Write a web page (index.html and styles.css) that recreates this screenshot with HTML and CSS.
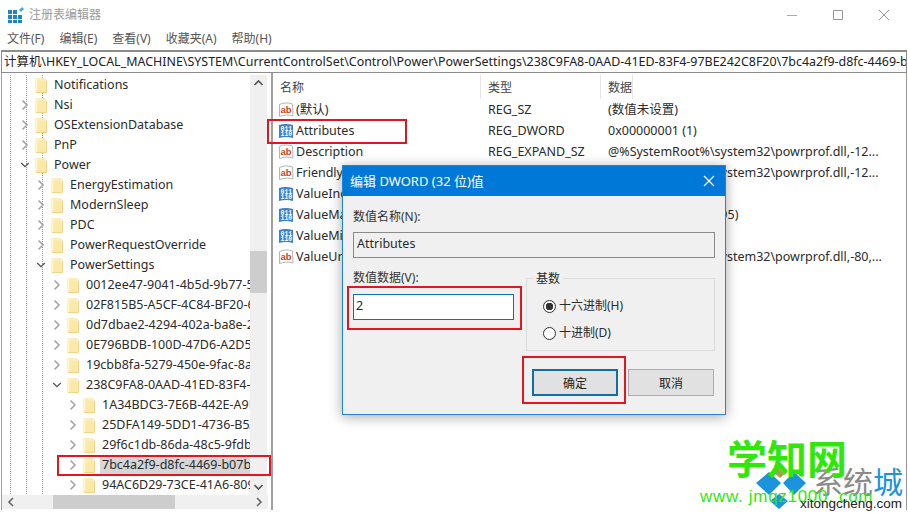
FILE: index.html
```html
<!DOCTYPE html>
<html lang="zh">
<head>
<meta charset="utf-8">
<title>注册表编辑器</title>
<link rel="stylesheet" href="styles.css">
</head>
<body>
<svg class="defs" width="0" height="0" aria-hidden="true">
  <symbol id="folder" viewBox="0 0 14 16">
    <path d="M1 1h10l2 3v11.500H1z" fill="#fcecb6"/>
    <path d="M1 1h2.500v14.500H1z" fill="#fdf3cf"/>
    <path d="M3.500 4h9v11.500h-9z" fill="#fce8a8"/>
    <path d="M12.500 4.500v11H2" fill="none" stroke="#f0d488"/>
  </symbol>
  <symbol id="chev-r" viewBox="0 0 10 12"><path d="M2.500 1.500 7 6l-4.500 4.500" fill="none" stroke="#a6a6a6" stroke-width="1.600"/></symbol>
  <symbol id="chev-d" viewBox="0 0 12 10"><path d="M1.500 2.500 6 7l4.500-4.500" fill="none" stroke="#555" stroke-width="1.600"/></symbol>
  <symbol id="page-sz" viewBox="0 0 16 16">
    <path d="M1.500 2.500c4-2 9-2 13-.5l.5 12c-4-1.500-9-1-13.500.5z" fill="#fff" stroke="#b4b4b4"/>
  </symbol>
  <symbol id="page-dw" viewBox="0 0 16 16">
    <path d="M1 2c4-1.500 9-1.500 14 0v13c-5-1.500-10-1-14 0z" fill="#3a80cf"/>
  </symbol>
</svg>

<div class="window">
  <header class="titlebar">
    <svg class="app-icon" width="16" height="16" viewBox="0 0 16 16">
      <path d="M0 3h4v4H0zM5 3h4v4H5zM0 8h4v4H0zM5 8h4v4H5zM10 8h4v4h-4zM0 13h4v3H0zM5 13h4v3H5zM10 13h4v3h-4z" fill="#1c86c8"/>
      <path d="M11 3l3-3 2 2-3 3z" fill="#4aa7dc"/>
    </svg>
    <span class="app-name">注册表编辑器</span>
    <div class="winbtns">
      <svg width="12" height="12" viewBox="0 0 12 12"><path d="M1 6.500h10" stroke="#aaa"/></svg>
      <svg width="12" height="12" viewBox="0 0 12 12"><path d="M1.500 1.500h9v9h-9z" fill="none" stroke="#999"/></svg>
      <svg width="12" height="12" viewBox="0 0 12 12"><path d="M1 1l10 10M11 1 1 11" stroke="#999"/></svg>
    </div>
  </header>
  <nav class="menubar">
    <span>文件(F)</span><span>编辑(E)</span><span>查看(V)</span><span>收藏夹(A)</span><span>帮助(H)</span>
  </nav>
  <div class="address">计算机\HKEY_LOCAL_MACHINE\SYSTEM\CurrentControlSet\Control\Power\PowerSettings\238C9FA8-0AAD-41ED-83F4-97BE242C8F20\7bc4a2f9-d8fc-4469-b07b-33eb785aaca0</div>
  <main class="panes">
    <section class="tree-pane">
      <div class="tree-view">
        <ul class="tree">
          <li class="node l1 none"><svg class="tw"></svg><svg class="fd"><use href="#folder"/></svg><span>Notifications</span></li>
          <li class="node l1"><svg class="tw"><use href="#chev-r"/></svg><svg class="fd"><use href="#folder"/></svg><span>Nsi</span></li>
          <li class="node l1"><svg class="tw"><use href="#chev-r"/></svg><svg class="fd"><use href="#folder"/></svg><span>OSExtensionDatabase</span></li>
          <li class="node l1"><svg class="tw"><use href="#chev-r"/></svg><svg class="fd"><use href="#folder"/></svg><span>PnP</span></li>
          <li class="node l1"><svg class="tw"><use href="#chev-d"/></svg><svg class="fd"><use href="#folder"/></svg><span>Power</span></li>
          <li class="node l2"><svg class="tw"><use href="#chev-r"/></svg><svg class="fd"><use href="#folder"/></svg><span>EnergyEstimation</span></li>
          <li class="node l2"><svg class="tw"><use href="#chev-r"/></svg><svg class="fd"><use href="#folder"/></svg><span>ModernSleep</span></li>
          <li class="node l2"><svg class="tw"><use href="#chev-r"/></svg><svg class="fd"><use href="#folder"/></svg><span>PDC</span></li>
          <li class="node l2"><svg class="tw"><use href="#chev-r"/></svg><svg class="fd"><use href="#folder"/></svg><span>PowerRequestOverride</span></li>
          <li class="node l2"><svg class="tw"><use href="#chev-d"/></svg><svg class="fd"><use href="#folder"/></svg><span>PowerSettings</span></li>
          <li class="node l3"><svg class="tw"><use href="#chev-r"/></svg><svg class="fd"><use href="#folder"/></svg><span class="clip">0012ee47-9041-4b5d-9b77-535fba8b1442</span></li>
          <li class="node l3"><svg class="tw"><use href="#chev-r"/></svg><svg class="fd"><use href="#folder"/></svg><span class="clip">02F815B5-A5CF-4C84-BF20-649D1F75D3D8</span></li>
          <li class="node l3"><svg class="tw"><use href="#chev-r"/></svg><svg class="fd"><use href="#folder"/></svg><span class="clip">0d7dbae2-4294-402a-ba8e-26777e8488cd</span></li>
          <li class="node l3"><svg class="tw"><use href="#chev-r"/></svg><svg class="fd"><use href="#folder"/></svg><span class="clip">0E796BDB-100D-47D6-A2D5-F7D2DAA51F51</span></li>
          <li class="node l3"><svg class="tw"><use href="#chev-r"/></svg><svg class="fd"><use href="#folder"/></svg><span class="clip">19cbb8fa-5279-450e-9fac-8a3d5fedd0c1</span></li>
          <li class="node l3"><svg class="tw"><use href="#chev-d"/></svg><svg class="fd"><use href="#folder"/></svg><span class="clip">238C9FA8-0AAD-41ED-83F4-97BE242C8F20</span></li>
          <li class="node l4"><svg class="tw"><use href="#chev-r"/></svg><svg class="fd"><use href="#folder"/></svg><span class="clip">1A34BDC3-7E6B-442E-A9D0-64B6EF378E84</span></li>
          <li class="node l4"><svg class="tw"><use href="#chev-r"/></svg><svg class="fd"><use href="#folder"/></svg><span class="clip">25DFA149-5DD1-4736-B5AB-E8A37B5B8187</span></li>
          <li class="node l4"><svg class="tw"><use href="#chev-r"/></svg><svg class="fd"><use href="#folder"/></svg><span class="clip">29f6c1db-86da-48c5-9fdb-f2b67b1f44da</span></li>
          <li class="node l4 selected"><svg class="tw"><use href="#chev-r"/></svg><svg class="fd"><use href="#folder"/></svg><span class="clip">7bc4a2f9-d8fc-4469-b07b-33eb785aaca0</span></li>
          <li class="node l4"><svg class="tw"><use href="#chev-r"/></svg><svg class="fd"><use href="#folder"/></svg><span class="clip">94AC6D29-73CE-41A6-809F-6363BA21B47E</span></li>
        </ul>
        <div class="vscroll">
          <svg width="17" height="17" viewBox="0 0 17 17"><path d="M4.500 10 8.500 6l4 4" fill="none" stroke="#555" stroke-width="1.600"/></svg>
          <div class="vthumb"></div>
          <svg width="17" height="17" viewBox="0 0 17 17"><path d="M4.500 7l4 4 4-4" fill="none" stroke="#555" stroke-width="1.600"/></svg>
        </div>
      </div>
      <div class="hscroll">
        <svg width="18" height="14" viewBox="0 0 18 14"><path d="M11 3 7 7l4 4" fill="none" stroke="#666" stroke-width="1.600"/></svg>
        <div class="hthumb"></div>
        <svg width="18" height="14" viewBox="0 0 18 14"><path d="M7 3l4 4-4 4" fill="none" stroke="#666" stroke-width="1.600"/></svg>
      </div>
    </section>
    <section class="list-pane">
      <div class="list-row list-head"><span class="c-name">名称</span><span class="c-type">类型</span><span class="c-data">数据</span></div>
      <div class="list-row"><span class="c-name"><svg class="ri" viewBox="0 0 16 16"><use href="#page-sz" width="16" height="16"/><text x="2.500" y="10.500" class="ab">ab</text></svg>(默认)</span><span class="c-type">REG_SZ</span><span class="c-data">(数值未设置)</span></div>
      <div class="list-row"><span class="c-name"><svg class="ri" viewBox="0 0 16 16"><use href="#page-dw" width="16" height="16"/><text x="2.500" y="7.500" class="bits">011</text><text x="2.500" y="13" class="bits">110</text></svg>Attributes</span><span class="c-type">REG_DWORD</span><span class="c-data">0x00000001 (1)</span></div>
      <div class="list-row"><span class="c-name"><svg class="ri" viewBox="0 0 16 16"><use href="#page-sz" width="16" height="16"/><text x="2.500" y="10.500" class="ab">ab</text></svg>Description</span><span class="c-type">REG_EXPAND_SZ</span><span class="c-data">@%SystemRoot%\system32\powrprof.dll,-12...</span></div>
      <div class="list-row"><span class="c-name"><svg class="ri" viewBox="0 0 16 16"><use href="#page-sz" width="16" height="16"/><text x="2.500" y="10.500" class="ab">ab</text></svg>FriendlyName</span><span class="c-type">REG_EXPAND_SZ</span><span class="c-data">@%SystemRoot%\system32\powrprof.dll,-12...</span></div>
      <div class="list-row"><span class="c-name"><svg class="ri" viewBox="0 0 16 16"><use href="#page-dw" width="16" height="16"/><text x="2.500" y="7.500" class="bits">011</text><text x="2.500" y="13" class="bits">110</text></svg>ValueIncrement</span><span class="c-type">REG_DWORD</span><span class="c-data">0x00000001 (1)</span></div>
      <div class="list-row"><span class="c-name"><svg class="ri" viewBox="0 0 16 16"><use href="#page-dw" width="16" height="16"/><text x="2.500" y="7.500" class="bits">011</text><text x="2.500" y="13" class="bits">110</text></svg>ValueMax</span><span class="c-type">REG_DWORD</span><span class="c-data">0xffffffff (4294967295)</span></div>
      <div class="list-row"><span class="c-name"><svg class="ri" viewBox="0 0 16 16"><use href="#page-dw" width="16" height="16"/><text x="2.500" y="7.500" class="bits">011</text><text x="2.500" y="13" class="bits">110</text></svg>ValueMin</span><span class="c-type">REG_DWORD</span><span class="c-data">0x00000000 (0)</span></div>
      <div class="list-row"><span class="c-name"><svg class="ri" viewBox="0 0 16 16"><use href="#page-sz" width="16" height="16"/><text x="2.500" y="10.500" class="ab">ab</text></svg>ValueUnits</span><span class="c-type">REG_EXPAND_SZ</span><span class="c-data">@%SystemRoot%\system32\powrprof.dll,-80,...</span></div>
    </section>
  </main>
</div>

<div class="dialog">
  <div class="dlg-title">
    <span>编辑 DWORD (32 位)值</span>
    <svg width="12" height="12" viewBox="0 0 12 12"><path d="M1 1l10 10M11 1 1 11" stroke="#fff" stroke-width="1.200"/></svg>
  </div>
  <div class="dlg-body">
    <label class="dlg-label">数值名称(N):</label>
    <div class="field readonly">Attributes</div>
    <div class="dlg-mid">
      <div class="col-value">
        <label class="dlg-label">数值数据(V):</label>
        <div class="field editable">2</div>
      </div>
      <fieldset class="base">
        <legend>基数</legend>
        <div class="radio checked"><i></i>十六进制(H)</div>
        <div class="radio"><i></i>十进制(D)</div>
      </fieldset>
    </div>
    <div class="dlg-actions">
      <button class="btn primary">确定</button>
      <button class="btn">取消</button>
    </div>
  </div>
</div>

<div class="mark m-attr"></div>
<div class="mark m-tree"></div>
<div class="mark m-input"></div>
<div class="mark m-ok"></div>

<svg class="wm-logo" width="54" height="50" viewBox="0 0 54 50">
  <path d="M25 1 32 9 25 15 18 9z" fill="#a8a050"/>
  <path d="M14 9 26 20 14 32 1 20z" fill="#1b94dc"/>
  <path d="M39 9 51 20 39 32 28 20z" fill="#1b94dc"/>
  <path d="M24 31 33 38 24 46 15 38z" fill="#1b94dc"/>
</svg>
<div class="wm-cn">系统<b>城</b></div>
<div class="wm-main">学知网</div>
<div class="wm-sub">www. jmqz1000. com</div>
<div class="wm-url">xitongcheng.com</div>
</body>
</html>
```
FILE: styles.css
```css
* { box-sizing: border-box; }
html, body { margin: 0; padding: 0; }
body {
  width: 908px; height: 513px; overflow: hidden; position: relative;
  background: #fff; color: #2b2b2b;
  font: 12.500px/20px "Noto Sans", "Noto Sans CJK SC", sans-serif;
}
.defs { position: absolute; }
.ab { font: bold 9.500px "Liberation Sans", sans-serif; fill: #c4451d; }
.bits { font: bold 6.500px "Liberation Mono", monospace; fill: #fff; }

.window { display: flex; flex-direction: column; height: 513px; padding: 0 1px 3px 1px; }
.titlebar { display: flex; align-items: center; height: 29px; padding-left: 7px; flex: none; }
.app-icon { margin-right: 5px; }
.app-name { color: #9a9a9a; font-size: 12px; }
.winbtns { margin-left: auto; display: flex; gap: 34px; padding-right: 17px; }
.menubar { display: flex; gap: 15px; height: 20px; padding-left: 6px; color: #555; font-size: 12px; flex: none; align-items: center; margin-bottom: 1px; }
.address {
  flex: none; height: 23px; border: 1px solid #8c8c8c; border-width: 2px 1px 1px;
  padding-left: 2px; line-height: 19px; white-space: nowrap; overflow: hidden; color: #222; font-size: 12.440px;
}
.panes { flex: 1; display: flex; min-height: 0; }

.tree-pane {
  width: 272px; flex: none; border-right: 2px solid #a0a0a0; border-left: 1px solid #a0a0a0;
  display: flex; flex-direction: column; padding-top: 2px;
}
.tree-view { flex: 1; display: flex; min-height: 0; overflow: hidden; }
.tree {
  list-style: none; margin: 0; padding: 0; width: 248px; flex: none; overflow: hidden;
  background-image:
    repeating-linear-gradient(#9a9a9a 0 1px, transparent 1px 2px),
    repeating-linear-gradient(#9a9a9a 0 1px, transparent 1px 2px),
    repeating-linear-gradient(#9a9a9a 0 1px, transparent 1px 2px);
  background-size: 1px 100%;
  background-position: 8px 0, 24px 0, 40px 0;
  background-repeat: no-repeat;
}
.node { display: flex; align-items: center; height: 20px; white-space: nowrap; }
.l1 { padding-left: 18px; }
.l2 { padding-left: 34px; }
.l3 { padding-left: 50px; }
.l4 { padding-left: 66px; }
.tw { width: 10px; height: 12px; flex: none; }
.fd { width: 14px; height: 16px; margin: 0 6px 0 4px; flex: none; }
.node span { flex: none; }
.node .clip { flex: 1; min-width: 0; overflow: hidden; }
.selected .clip { background: #d6d6d6; margin-left: -2px; padding-left: 2px; }
.vscroll { width: 17px; flex: none; background: #f0f0f0; display: flex; flex-direction: column; align-items: center; justify-content: space-between; position: relative; }
.vthumb { position: absolute; left: 0; right: 0; top: 176px; height: 42px; background: #cdcdcd; }
.hscroll { height: 14px; flex: none; background: #f0f0f0; display: flex; justify-content: space-between; position: relative; margin-bottom: 1px; width: 266px; }
.hthumb { position: absolute; left: 51px; width: 122px; top: 0; bottom: 0; background: #cdcdcd; }

.list-pane { flex: 1; min-width: 0; overflow: hidden; padding-top: 2px; border-right: 1px solid #999; }
.list-row { display: flex; height: 21px; line-height: 21px; white-space: nowrap; }
.list-head { height: 24px; line-height: 25px; color: #444; font-size: 12px; }
.c-name { width: 208px; padding-left: 5px; display: flex; align-items: center; flex: none; }
.list-head .c-name { padding-left: 7px; }
.c-type { width: 120px; padding-left: 7px; flex: none; }
.c-data { padding-left: 7px; flex: none; }
.list-head span { border-right: 1px solid #e5e5e5; }
.ri { width: 16px; height: 16px; margin-right: 2px; flex: none; }

.dialog {
  position: absolute; left: 342px; top: 165px; width: 384px; height: 250px;
  background: #f0f0f0; border: 1px solid #1c86d8; box-shadow: 0 2px 12px rgba(0,0,0,.35);
  display: flex; flex-direction: column;
}
.dlg-title { height: 30px; background: #0078d7; color: #fff; display: flex; align-items: center; justify-content: space-between; padding: 0 10px 0 7px; flex: none; font-size: 13px; }
.dlg-body { padding: 11px 10px 0 10px; flex: 1; display: flex; flex-direction: column; }
.dlg-label { display: block; height: 20px; line-height: 20px; color: #333; font-size: 12px; }
.field { height: 26px; line-height: 22px; padding-left: 3px; }
.readonly { border: 1px solid #8a8a8a; background: #f0f0f0; margin-top: 5px; }
.dlg-mid { display: flex; gap: 12px; margin-top: 10px; height: 83px; }
.col-value { width: 161px; flex: none; }
.editable { border: 1px solid #1270a8; background: #fff; margin-top: 6px; padding-left: 2px; }
.base { flex: 1; margin: 10px 0 0; padding: 0; border: 1px solid #dcdcdc; position: relative; height: 73px; }
.base legend { position: absolute; left: 6px; top: -10px; background: #f0f0f0; padding: 0 3px; font-size: 12px; line-height: 20px; }
.radio { display: flex; align-items: center; height: 20px; margin-left: 16px; font-size: 12px; }
.radio:first-of-type { margin-top: 17px; }
.radio + .radio { margin-top: 7px; }
.radio i { width: 13px; height: 13px; border: 1px solid #333; border-radius: 50%; background: #fff; margin-right: 3px; flex: none; }
.radio.checked i { background: radial-gradient(#333 0 3.500px, #fff 4px); }
.dlg-actions { display: flex; justify-content: flex-end; gap: 10px; margin-top: 18px; padding-right: 1px; }
.btn { width: 86px; height: 27px; background: #e1e1e1; border: 1px solid #adadad; font: 12px "Noto Sans CJK SC", sans-serif; color: #222; padding: 0; }
.primary { border: 2px solid #0f6fa8; }

.mark { position: absolute; border: 2px solid #e0171f; }
.m-attr { left: 267px; top: 119px; width: 140px; height: 25px; }
.m-tree { left: 57px; top: 455px; width: 214px; height: 21px; }
.m-input { left: 347px; top: 286px; width: 175px; height: 44px; }
.m-ok { left: 522px; top: 356px; width: 104px; height: 48px; }

.wm-logo { position: absolute; left: 755px; top: 463px; }
.wm-cn { position: absolute; left: 813px; top: 462px; font: 30px/36px "Noto Sans CJK SC", sans-serif; color: #8a8a8a; white-space: nowrap; }
.wm-cn b { font-weight: 400; color: #1b94dc; }
.wm-main { position: absolute; left: 727px; top: 434px; font: bold 40px/46px "Noto Sans CJK SC", sans-serif; color: #2fe80a; }
.wm-sub { position: absolute; left: 700px; top: 487px; font: 17px/20px "Liberation Sans", sans-serif; color: #2fe80a; letter-spacing: .7px; white-space: nowrap; }
.wm-url { position: absolute; left: 800px; top: 496px; font: 13.500px/16px "Liberation Sans", sans-serif; color: #222; }
```
